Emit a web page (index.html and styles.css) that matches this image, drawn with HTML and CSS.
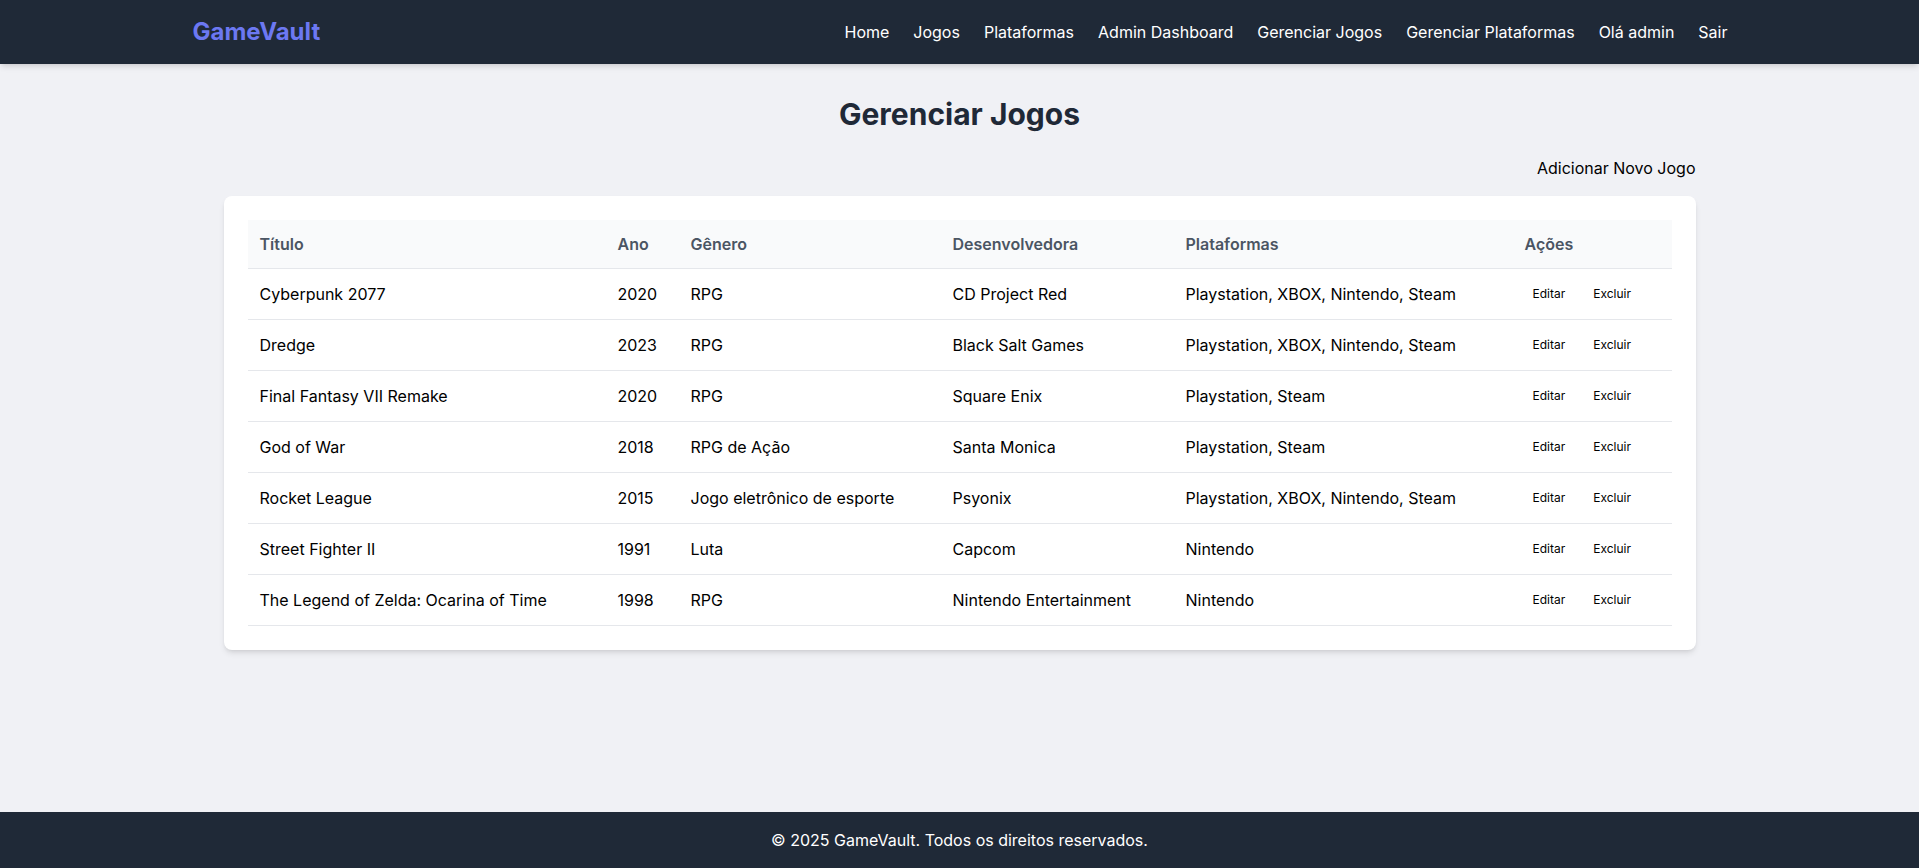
FILE: index.html
```html
<!DOCTYPE html>
<html lang="pt-BR">
<head>
<meta charset="utf-8">
<title>Gerenciar Jogos - GameVault</title>
<link rel="stylesheet" href="styles.css">
</head>
<body>
<header class="site-header">
  <div class="header-inner">
    <a class="logo" href="#">GameVault</a>
    <nav class="nav">
      <a href="#">Home</a>
      <a href="#">Jogos</a>
      <a href="#">Plataformas</a>
      <a href="#">Admin Dashboard</a>
      <a href="#">Gerenciar Jogos</a>
      <a href="#">Gerenciar Plataformas</a>
      <a href="#">Olá admin</a>
      <a href="#">Sair</a>
    </nav>
  </div>
</header>
<main class="main">
  <div class="container">
    <h1 class="page-title">Gerenciar Jogos</h1>
    <div class="toolbar"><a class="add-link" href="#">Adicionar Novo Jogo</a></div>
    <div class="card">
      <table class="games">
        <colgroup>
          <col class="c-title"><col class="c-year"><col class="c-genre"><col class="c-dev"><col class="c-plat"><col class="c-act">
        </colgroup>
        <thead>
          <tr><th>Título</th><th>Ano</th><th>Gênero</th><th>Desenvolvedora</th><th>Plataformas</th><th>Ações</th></tr>
        </thead>
        <tbody>
          <tr><td>Cyberpunk 2077</td><td>2020</td><td>RPG</td><td>CD Project Red</td><td>Playstation, XBOX, Nintendo, Steam</td><td><div class="actions"><button class="btn">Editar</button><button class="btn">Excluir</button></div></td></tr>
          <tr><td>Dredge</td><td>2023</td><td>RPG</td><td>Black Salt Games</td><td>Playstation, XBOX, Nintendo, Steam</td><td><div class="actions"><button class="btn">Editar</button><button class="btn">Excluir</button></div></td></tr>
          <tr><td>Final Fantasy VII Remake</td><td>2020</td><td>RPG</td><td>Square Enix</td><td>Playstation, Steam</td><td><div class="actions"><button class="btn">Editar</button><button class="btn">Excluir</button></div></td></tr>
          <tr><td>God of War</td><td>2018</td><td>RPG de Ação</td><td>Santa Monica</td><td>Playstation, Steam</td><td><div class="actions"><button class="btn">Editar</button><button class="btn">Excluir</button></div></td></tr>
          <tr><td>Rocket League</td><td>2015</td><td>Jogo eletrônico de esporte</td><td>Psyonix</td><td>Playstation, XBOX, Nintendo, Steam</td><td><div class="actions"><button class="btn">Editar</button><button class="btn">Excluir</button></div></td></tr>
          <tr><td>Street Fighter II</td><td>1991</td><td>Luta</td><td>Capcom</td><td>Nintendo</td><td><div class="actions"><button class="btn">Editar</button><button class="btn">Excluir</button></div></td></tr>
          <tr><td>The Legend of Zelda: Ocarina of Time</td><td>1998</td><td>RPG</td><td>Nintendo Entertainment</td><td>Nintendo</td><td><div class="actions"><button class="btn">Editar</button><button class="btn">Excluir</button></div></td></tr>
        </tbody>
      </table>
    </div>
  </div>
</main>
<footer class="site-footer">
  <p>© 2025 GameVault. Todos os direitos reservados.</p>
</footer>
</body>
</html>
```

FILE: styles.css
```css
* { box-sizing: border-box; }
html, body { margin: 0; padding: 0; }
body {
  font-family: Inter, "Noto Sans", "Liberation Sans", sans-serif;
  font-size: 16px;
  line-height: 1.5;
  color: #000;
  background: #f0f1f5;
  min-height: 100vh;
  display: flex;
  flex-direction: column;
}
a { color: inherit; text-decoration: none; }

.site-header {
  background: #1f2937;
  height: 64px;
  box-shadow: 0 4px 6px -1px rgba(0,0,0,0.1), 0 2px 4px -2px rgba(0,0,0,0.1);
  position: relative;
  z-index: 1;
}
.header-inner {
  max-width: 1536px;
  margin: 0 auto;
  height: 100%;
  display: flex;
  align-items: center;
  justify-content: space-between;
}
.logo {
  color: #6c78f2;
  font-size: 24px;
  font-weight: 700;
  line-height: 32px;
  margin-left: 1px;
}
.nav { display: flex; gap: 24px; }
.nav a { color: #ffffff; font-size: 16px; line-height: 24px; }

.main { flex: 1; padding-top: 32px; }
.container { max-width: 1536px; margin: 0 auto; padding: 0 32px; }
.page-title {
  margin: 0 0 24px;
  text-align: center;
  font-size: 30px;
  line-height: 36px;
  font-weight: 700;
  color: #1f2937;
}
.toolbar { display: flex; justify-content: flex-end; margin-bottom: 16px; }
.add-link { color: #000; }

.card {
  background: #fff;
  border-radius: 8px;
  box-shadow: 0 4px 6px -1px rgba(0,0,0,0.1), 0 2px 4px -2px rgba(0,0,0,0.1);
  padding: 24px;
}
.games { width: 100%; border-collapse: collapse; table-layout: fixed; }
.c-title { width: 358px; }
.c-year { width: 73px; }
.c-genre { width: 262px; }
.c-dev { width: 233px; }
.c-plat { width: 339px; }
.c-act { width: 159px; }
.games th {
  background: #f9fafb;
  color: #4b5563;
  font-weight: 600;
  text-align: left;
  padding: 12px;
  border-bottom: 1px solid #e5e7eb;
}
.games td {
  padding: 12px;
  border-bottom: 1px solid #e5e7eb;
  vertical-align: middle;
  white-space: nowrap;
}
.actions { display: flex; gap: 12px; }
.btn {
  font-family: inherit;
  font-size: 12px;
  line-height: 18px;
  padding: 4px 8px;
  margin: 0;
  border: 0;
  background: transparent;
  color: #000;
  cursor: pointer;
}

.site-footer {
  background: #1f2937;
  color: #fff;
  text-align: center;
  padding: 16px;
}
.site-footer p { margin: 0; line-height: 24px; }
```
